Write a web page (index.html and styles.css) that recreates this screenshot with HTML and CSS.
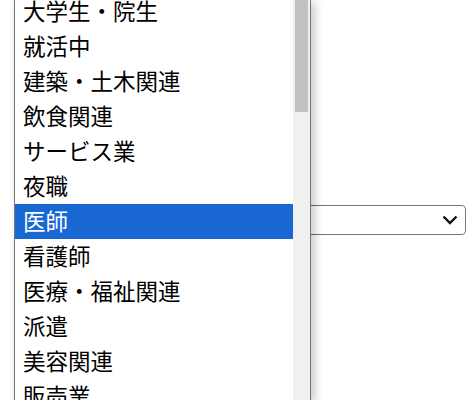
FILE: index.html
```html
<!DOCTYPE html>
<html lang="ja">
<head>
<meta charset="utf-8">
<link rel="stylesheet" href="styles.css">
</head>
<body>
<div class="page">
  <div class="select">
    <svg class="chev" width="16" height="10" viewBox="0 0 16 10"><path d="M1.5 1.5 L8 8 L14.5 1.5" fill="none" stroke="#111" stroke-width="2.4"/></svg>
  </div>
</div>
<div class="popup">
  <div class="list">
    <div class="items">
      <div class="opt">大学生・院生</div>
      <div class="opt">就活中</div>
      <div class="opt">建築・土木関連</div>
      <div class="opt">飲食関連</div>
      <div class="opt">サービス業</div>
      <div class="opt">夜職</div>
      <div class="opt sel">医師</div>
      <div class="opt">看護師</div>
      <div class="opt">医療・福祉関連</div>
      <div class="opt">派遣</div>
      <div class="opt">美容関連</div>
      <div class="opt">販売業</div>
    </div>
  </div>
  <div class="track"><div class="thumb"></div></div>
</div>
</body>
</html>
```
FILE: styles.css
```css
html, body {
  margin: 0;
  padding: 0;
  background: #fff;
  overflow: hidden;
  height: 400px;
}
.page {
  padding-top: 205px;
  display: flex;
  justify-content: flex-end;
  padding-right: 1px;
}
.select {
  width: 300px;
  height: 28px;
  border: 1px solid #767676;
  border-radius: 4px;
  display: flex;
  align-items: center;
  justify-content: flex-end;
  padding-right: 7px;
}
.chev {
  display: block;
}
.popup {
  position: absolute;
  left: 14px;
  top: 0;
  height: 400px;
  display: flex;
  border-left: 1px solid #767676;
  border-right: 1px solid #767676;
  background: #fff;
  box-shadow: 4px 2px 9px rgba(0,0,0,0.22);
}
.list {
  width: 278px;
  overflow: hidden;
}
.items {
  margin-top: -6px;
}
.opt {
  height: 35px;
  line-height: 32px;
  padding-left: 8px;
  font-family: "Noto Sans CJK JP", sans-serif;
  font-size: 22.5px;
  color: #000;
  white-space: nowrap;
}
.opt.sel {
  background: #1967d2;
  color: #fff;
}
.track {
  width: 17px;
  background: #f0f0f0;
  display: flex;
  justify-content: center;
}
.thumb {
  width: 13px;
  height: 112px;
  background: #c1c1c1;
}
```
